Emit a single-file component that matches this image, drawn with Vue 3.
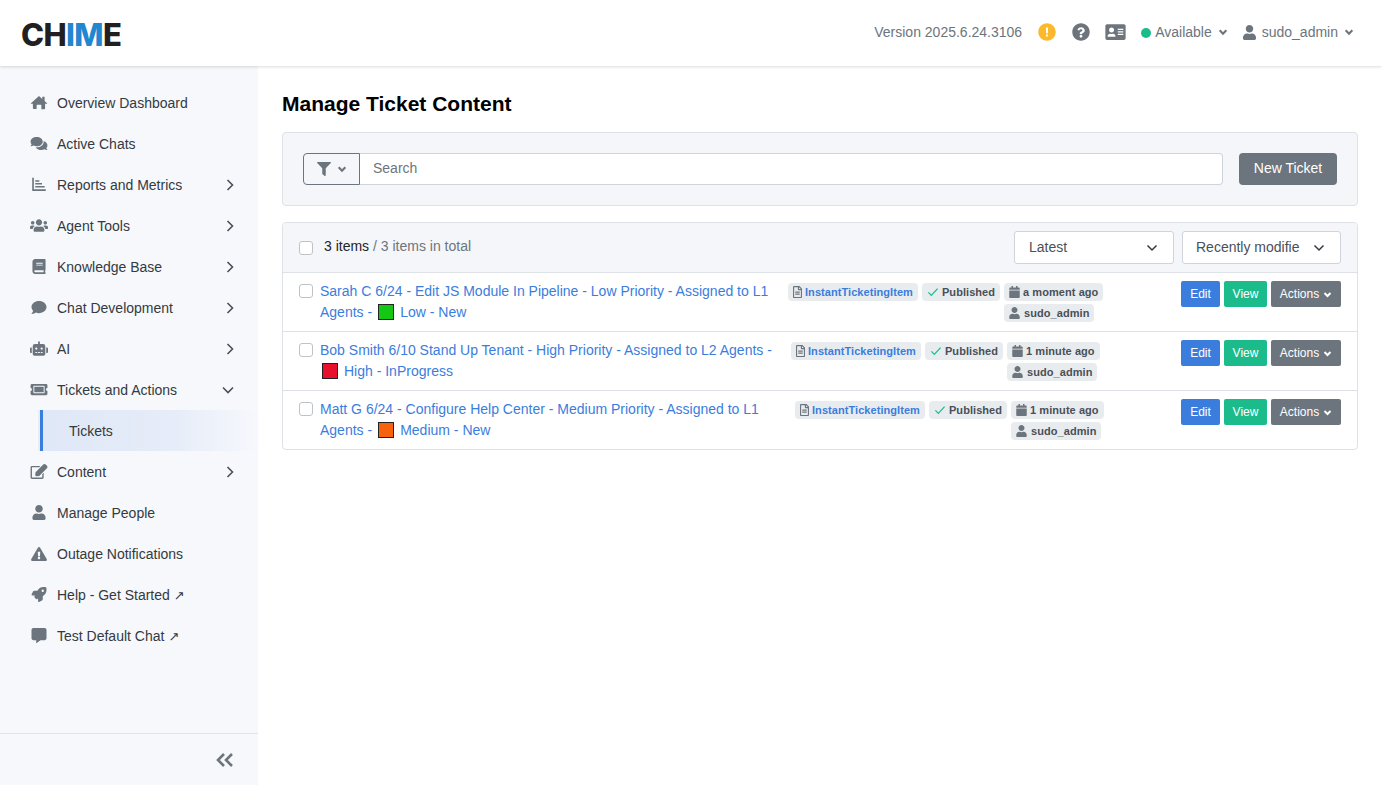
<script setup>
const icons = {
  home: ['0 0 576 512', 'M288 36L400 134V68c0-6 5-11 11-11h58c6 0 11 5 11 11v137l84 74c8 7 3 21-8 21h-60v164c0 13-11 24-24 24H368V352c0-9-7-16-16-16H224c-9 0-16 7-16 16v128H104c-13 0-24-11-24-24V300H20c-11 0-16-14-8-21z'],
  comments: ['0 0 576 512', 'M416 192c0-88.4-93.1-160-208-160S0 103.6 0 192c0 34.3 14.1 65.9 38 92-13.4 30.2-35.5 54.2-35.8 54.5-2.2 2.3-2.8 5.7-1.5 8.7S4.8 352 8 352c36.6 0 66.9-12.3 88.7-25 32.2 15.7 70.3 25 111.3 25 114.9 0 208-71.6 208-160zm122 220c23.9-26 38-57.7 38-92 0-66.9-53.5-124.2-129.3-148.1.9 6.6 1.3 13.3 1.3 20.1 0 105.9-107.7 192-240 192-10.8 0-21.3-.8-31.7-1.9C207.8 439.6 281.8 480 368 480c41 0 79.1-9.2 111.3-25 21.8 12.7 52.1 25 88.7 25 3.2 0 6.1-1.9 7.3-4.8 1.3-2.9.7-6.3-1.5-8.7-.3-.3-22.4-24.2-35.8-54.5z'],
  chart: ['0 0 512 512', 'M24 24h56v392c0 4 2 6 6 6h402v60H48c-13 0-24-11-24-24zM128 112h140v52H128zM128 208h230v52H128zM128 304h320v52H128z'],
  users: ['0 0 640 512', 'M96 224c35.3 0 64-28.7 64-64s-28.7-64-64-64-64 28.7-64 64 28.7 64 64 64zm448 0c35.3 0 64-28.7 64-64s-28.7-64-64-64-64 28.7-64 64 28.7 64 64 64zm32 32h-64c-17.6 0-33.5 7.1-45.1 18.6 40.3 22.1 68.9 62 75.1 109.4h66c17.7 0 32-14.3 32-32v-32c0-35.3-28.7-64-64-64zm-256 0c61.9 0 112-50.1 112-112S381.9 32 320 32 208 82.1 208 144s50.1 112 112 112zm76.8 32h-8.3c-20.8 10-43.9 16-68.5 16s-47.6-6-68.5-16h-8.3C179.6 288 128 339.6 128 403.2V432c0 26.5 21.5 48 48 48h288c26.5 0 48-21.5 48-48v-28.8c0-63.6-51.6-115.2-115.2-115.2zm-223.7-13.4C161.5 263.1 145.6 256 128 256H64c-35.3 0-64 28.7-64 64v32c0 17.7 14.3 32 32 32h65.9c6.3-47.4 34.9-87.3 75.2-109.4z'],
  book: ['0 0 448 512', 'M448 360V24c0-13.3-10.7-24-24-24H96C43 0 0 43 0 96v320c0 53 43 96 96 96h328c13.3 0 24-10.7 24-24v-16c0-7.5-3.5-14.3-8.9-18.7-4.2-15.4-4.2-59.3 0-74.7 5.4-4.3 8.9-11.1 8.9-18.6zM128 134c0-3.3 2.7-6 6-6h212c3.3 0 6 2.7 6 6v20c0 3.3-2.7 6-6 6H134c-3.3 0-6-2.7-6-6v-20zm0 64c0-3.3 2.7-6 6-6h212c3.3 0 6 2.7 6 6v20c0 3.3-2.7 6-6 6H134c-3.3 0-6-2.7-6-6v-20zm253.4 250H96c-17.7 0-32-14.3-32-32 0-17.6 14.4-32 32-32h285.4c-1.9 17.1-1.9 46.9 0 64z'],
  comment: ['0 0 512 512', 'M256 32C114.6 32 0 125.1 0 240c0 49.6 21.4 95 57 130.7C44.5 421.1 2.7 466 2.2 466.5c-2.2 2.3-2.8 5.7-1.5 8.7S4.8 480 8 480c66.3 0 116-31.8 140.6-51.4 32.7 12.3 69 19.4 107.4 19.4 141.4 0 256-93.1 256-208S397.4 32 256 32z'],
  robot: ['0 0 640 512', 'M32,224H64V416H32A31.96166,31.96166,0,0,1,0,384V256A31.96166,31.96166,0,0,1,32,224Zm512-48V448a64.06328,64.06328,0,0,1-64,64H160a64.06328,64.06328,0,0,1-64-64V176a79.974,79.974,0,0,1,80-80H288V32a32,32,0,0,1,64,0V96H464A79.974,79.974,0,0,1,544,176ZM264,256a40,40,0,1,0-40,40A39.997,39.997,0,0,0,264,256Zm-8,128H192v32h64Zm96,0H288v32h64ZM456,256a40,40,0,1,0-40,40A39.997,39.997,0,0,0,456,256Zm-8,128H384v32h64ZM640,256V384a31.96166,31.96166,0,0,1-32,32H576V224h32A31.96166,31.96166,0,0,1,640,256Z'],
  ticket: ['0 0 576 512', 'M128 160h320v192H128V160zm400 96c0 26.51 21.49 48 48 48v96c0 26.51-21.49 48-48 48H48c-26.51 0-48-21.49-48-48v-96c26.51 0 48-21.49 48-48s-21.49-48-48-48v-96c0-26.51 21.49-48 48-48h480c26.51 0 48 21.49 48 48v96c-26.51 0-48 21.49-48 48zm-48-104c0-13.255-10.745-24-24-24H120c-13.255 0-24 10.745-24 24v208c0 13.255 10.745 24 24 24h336c13.255 0 24-10.745 24-24V152z'],
  edit: ['0 0 576 512', 'M402.3 344.9l32-32c5-5 13.7-1.5 13.7 5.7V464c0 26.5-21.5 48-48 48H48c-26.5 0-48-21.5-48-48V112c0-26.5 21.5-48 48-48h273.5c7.1 0 10.7 8.6 5.7 13.7l-32 32c-1.5 1.5-3.5 2.3-5.7 2.3H48v352h352V350.5c0-2.1.8-4.1 2.3-5.6zm156.6-201.8L296.3 405.7l-90.4 10c-26.2 2.9-48.5-19.2-45.6-45.6l10-90.4L432.9 17.1c22.9-22.9 59.9-22.9 82.7 0l43.2 43.2c22.9 22.9 22.9 60 .1 82.8z'],
  user: ['0 0 448 512', 'M224 256c70.7 0 128-57.3 128-128S294.7 0 224 0 96 57.3 96 128s57.3 128 128 128zm89.6 32h-16.7c-22.2 10.2-46.9 16-72.9 16s-50.6-5.8-72.9-16h-16.7C60.2 288 0 348.2 0 422.4V464c0 26.5 21.5 48 48 48h352c26.5 0 48-21.5 48-48v-41.6c0-74.2-60.2-134.4-134.4-134.4z'],
  warning: ['0 0 576 512', 'M569.517 440.013C587.975 472.007 564.806 512 527.94 512H48.054c-36.937 0-59.999-40.055-41.577-71.987L246.423 23.985c18.467-32.009 64.72-31.951 83.154 0l239.94 416.028zM288 354c-25.405 0-46 20.595-46 46s20.595 46 46 46 46-20.595 46-46-20.595-46-46-46zm-43.673-165.346l7.418 136c.347 6.364 5.609 11.346 11.982 11.346h48.546c6.373 0 11.635-4.982 11.982-11.346l7.418-136c.375-6.874-5.098-12.654-11.982-12.654h-63.383c-6.884 0-12.356 5.78-11.981 12.654z'],
  rocket: ['0 0 512 512', 'M505.12019,19.09375c-1.18945-5.53125-6.65819-11-12.207-12.1875C460.716,0,435.507,0,410.40747,0,307.17523,0,245.26909,55.20312,199.05238,128H94.83772c-16.34763.01562-35.55658,11.875-42.88664,26.48438L2.51562,253.29688A28.4,28.4,0,0,0,0,264a24.00867,24.00867,0,0,0,24.00582,24H127.81618l-22.47457,22.46875c-11.36521,11.36133-12.99607,32.25781,0,45.25L156.24582,406.625c11.15623,11.1875,32.15619,13.15625,45.27726,0l22.47457-22.46875V488a24.00867,24.00867,0,0,0,24.00581,24,28.55934,28.55934,0,0,0,10.707-2.51562l98.72834-49.39063c14.62888-7.29687,26.50776-26.5,26.50776-42.85937V312.79688c72.59753-46.3125,128.03493-108.40626,128.03493-211.09376C512.07526,76.5,512.07526,51.29688,505.12019,19.09375ZM384.04033,168A40,40,0,1,1,424.05,128,40.02322,40.02322,0,0,1,384.04033,168Z'],
  commentAlt: ['0 0 512 512', 'M448 0H64C28.7 0 0 28.7 0 64v288c0 35.3 28.7 64 64 64h96v84c0 9.8 11.2 15.5 19.1 9.7L304 416h144c35.3 0 64-28.7 64-64V64c0-35.3-28.7-64-64-64z'],
  question: ['0 0 512 512', 'M504 256c0 137-111 248-248 248S8 393 8 256 119 8 256 8s248 111 248 248zM262 120c-48 0-79 20-103 56-3 5-2 11 2 14l30 23c5 3 11 3 15-2 16-20 27-31 51-31 18 0 40 11 40 29 0 13-11 20-29 30-21 12-48 26-48 62v4c0 6 5 11 11 11h48c6 0 11-5 11-11v-1c0-25 73-26 73-93 0-51-53-91-101-91zm-6 216c-22 0-40 18-40 40s18 40 40 40 40-18 40-40-18-40-40-40z'],
  alert: ['0 0 512 512', 'M504 256c0 136.997-111.043 248-248 248S8 392.997 8 256C8 119.083 119.043 8 256 8s248 111.083 248 248zm-248 70c-17 0-31 14-31 31s14 31 31 31 31-14 31-31-14-31-31-31zm-30-186l6 150c.3 6 5 10 11 10h26c6 0 10.700-4 11-10l6-150c.3-6-5-12-11-12h-38c-6 0-11.300 6-11 12z'],
  idCard: ['0 0 576 512', 'M528 32H48C21.5 32 0 53.5 0 80v352c0 26.500 21.500 48 48 48h480c26.500 0 48-21.500 48-48V80c0-26.500-21.500-48-48-48zM352 168c0-4.400 3.600-8 8-8h144c4.400 0 8 3.600 8 8v24c0 4.400-3.600 8-8 8H360c-4.400 0-8-3.600-8-8zm0 72c0-4.400 3.600-8 8-8h144c4.400 0 8 3.600 8 8v24c0 4.400-3.600 8-8 8H360c-4.400 0-8-3.600-8-8zm0 72c0-4.400 3.600-8 8-8h144c4.400 0 8 3.600 8 8v24c0 4.400-3.600 8-8 8H360c-4.400 0-8-3.600-8-8zM176 128c39.800 0 72 32.200 72 72s-32.200 72-72 72-72-32.200-72-72 32.200-72 72-72zM64 376c0-40 32-72 72-72h8c10 4 20 6 32 6s22-2 32-6h8c40 0 72 32 72 72 0 10-8 16-16 16H80c-8 0-16-6-16-16z'],
  filter: ['0 0 512 512', 'M487.976 0H24.028C2.71 0-8.047 25.866 7.058 40.971L192 225.941V432c0 7.831 3.821 15.17 10.237 19.662l80 55.98C298.02 518.69 320 507.493 320 487.98V225.941l184.947-184.97C520.021 25.896 509.338 0 487.976 0z'],
  calendar: ['0 0 448 512', 'M12 192h424c6.600 0 12 5.400 12 12v260c0 26.500-21.500 48-48 48H48c-26.500 0-48-21.500-48-48V204c0-6.600 5.400-12 12-12zm436-44v-36c0-26.500-21.500-48-48-48h-48V12c0-6.600-5.400-12-12-12h-40c-6.600 0-12 5.400-12 12v52H160V12c0-6.600-5.400-12-12-12h-40c-6.600 0-12 5.400-12 12v52H48C21.500 64 0 85.500 0 112v36c0 6.600 5.400 12 12 12h424c6.600 0 12-5.400 12-12z'],
  file: ['0 0 384 512', 'M288 248v28c0 6.6-5.4 12-12 12H108c-6.6 0-12-5.4-12-12v-28c0-6.6 5.4-12 12-12h168c6.6 0 12 5.4 12 12zm-12 72H108c-6.6 0-12 5.4-12 12v28c0 6.6 5.4 12 12 12h168c6.6 0 12-5.4 12-12v-28c0-6.6-5.4-12-12-12zm108-188.1V464c0 26.5-21.5 48-48 48H48c-26.5 0-48-21.5-48-48V48C0 21.5 21.500 0 48 0h204.100C264.800 0 277 5.100 286 14.100L369.900 98c9 8.900 14.100 21.200 14.100 33.900zm-128-80V128h76.100L256 51.900zM336 464V176H232c-13.300 0-24-10.700-24-24V48H48v416h288z']
}

const navItems = [
  { label: 'Overview Dashboard', icon: 'home' },
  { label: 'Active Chats', icon: 'comments' },
  { label: 'Reports and Metrics', icon: 'chart', arrow: 'right' },
  { label: 'Agent Tools', icon: 'users', arrow: 'right' },
  { label: 'Knowledge Base', icon: 'book', arrow: 'right' },
  { label: 'Chat Development', icon: 'comment', arrow: 'right' },
  { label: 'AI', icon: 'robot', arrow: 'right' },
  { label: 'Tickets and Actions', icon: 'ticket', arrow: 'down', children: ['Tickets'] },
  { label: 'Content', icon: 'edit', arrow: 'right' },
  { label: 'Manage People', icon: 'user' },
  { label: 'Outage Notifications', icon: 'warning' },
  { label: 'Help - Get Started', icon: 'rocket', external: true },
  { label: 'Test Default Chat', icon: 'commentAlt', external: true }
]

const tickets = [
  { id: 1, line1: 'Sarah C 6/24 - Edit JS Module In Pipeline - Low Priority - Assigned to L1', line2: 'Agents -', color: '#14c714', status: 'Low - New', time: 'a moment ago', metaLeft: 788 },
  { id: 2, line1: 'Bob Smith 6/10 Stand Up Tenant - High Priority - Assigned to L2 Agents -', line2: '', color: '#e8112d', status: 'High - InProgress', time: '1 minute ago', metaLeft: 791 },
  { id: 3, line1: 'Matt G 6/24 - Configure Help Center - Medium Priority - Assigned to L1', line2: 'Agents -', color: '#f7630c', status: 'Medium - New', time: '1 minute ago', metaLeft: 795 }
]
</script>

<template>
  <div class="page">
    <header class="topbar">
      <div class="logo">CH<span class="logo-blue">IM</span>E</div>
      <div class="top-right">
        <span class="version">Version 2025.6.24.3106</span>
        <svg class="top-icon alert" :viewBox="icons.alert[0]"><path fill-rule="evenodd" :d="icons.alert[1]" /></svg>
        <svg class="top-icon help" :viewBox="icons.question[0]"><path fill-rule="evenodd" :d="icons.question[1]" /></svg>
        <svg class="top-icon card" :viewBox="icons.idCard[0]"><path fill-rule="evenodd" :d="icons.idCard[1]" /></svg>
        <div class="status">
          <span class="dot"></span>
          <span>Available</span>
          <svg class="mini-chev" viewBox="0 0 12 12"><polyline points="2,4 6,8 10,4" /></svg>
        </div>
        <div class="top-user">
          <svg class="top-user-icon" :viewBox="icons.user[0]"><path :d="icons.user[1]" /></svg>
          <span>sudo_admin</span>
          <svg class="mini-chev" viewBox="0 0 12 12"><polyline points="2,4 6,8 10,4" /></svg>
        </div>
      </div>
    </header>

    <div class="body-row">
      <aside class="sidebar">
        <nav class="nav">
          <template v-for="item in navItems" :key="item.label">
            <div class="nav-item">
              <span class="nav-icon" :class="'i-' + item.icon">
                <svg :viewBox="icons[item.icon][0]"><path fill-rule="evenodd" :d="icons[item.icon][1]" /></svg>
              </span>
              <span class="nav-label">{{ item.label }}<span v-if="item.external" class="ext">↗</span></span>
              <svg v-if="item.arrow === 'right'" class="nav-arrow" viewBox="0 0 12 12"><polyline points="3.500,1 8.500,6 3.500,11" /></svg>
              <svg v-if="item.arrow === 'down'" class="nav-arrow down" viewBox="0 0 12 12"><polyline points="1,3.500 6,8.500 11,3.500" /></svg>
            </div>
            <div v-for="child in item.children" :key="child" class="nav-child">{{ child }}</div>
          </template>
        </nav>
        <div class="side-foot">
          <svg class="collapse" viewBox="0 0 18 14"><polyline points="8,1 2,7 8,13" /><polyline points="16,1 10,7 16,13" /></svg>
        </div>
      </aside>

      <main class="main">
        <h1 class="title">Manage Ticket Content</h1>

        <section class="search-card">
          <div class="search-group">
            <button class="filter-btn">
              <svg class="filter-icon" :viewBox="icons.filter[0]"><path :d="icons.filter[1]" /></svg>
              <svg class="mini-chev" viewBox="0 0 12 12"><polyline points="2,4 6,8 10,4" /></svg>
            </button>
            <div class="search-input">Search</div>
          </div>
          <button class="new-btn">New Ticket</button>
        </section>

        <section class="list">
          <div class="list-head">
            <span class="check"></span>
            <span class="count"><span class="count-dark">3 items</span> / 3 items in total</span>
            <div class="selects">
              <div class="select latest">
                <span class="sel-text">Latest</span>
                <svg class="sel-chev" viewBox="0 0 12 12"><polyline points="1.500,3.500 6,8 10.500,3.500" /></svg>
              </div>
              <div class="select recent">
                <span class="sel-text">Recently modifie</span>
                <svg class="sel-chev" viewBox="0 0 12 12"><polyline points="1.500,3.500 6,8 10.500,3.500" /></svg>
              </div>
            </div>
          </div>

          <div v-for="t in tickets" :key="t.id" class="row">
            <span class="check row-check"></span>
            <div class="row-title">
              <a class="link">{{ t.line1 }}</a><br />
              <a v-if="t.line2" class="link">{{ t.line2 }}</a>
              <span class="swatch" :class="{ first: !t.line2 }" :style="{ background: t.color }"></span>
              <a class="link">{{ t.status }}</a>
            </div>
            <div class="meta" :style="{ left: t.metaLeft - 283 + 'px' }">
              <span class="tag tag-type">
                <svg class="tag-icon grey" :viewBox="icons.file[0]"><path fill-rule="evenodd" :d="icons.file[1]" /></svg>
                InstantTicketingItem
              </span>
              <span class="tag">
                <svg class="tag-check" viewBox="0 0 14 12"><polyline points="1.500,6.500 5,10 12.500,2" /></svg>
                Published
              </span>
              <div class="tag-col">
                <span class="tag">
                  <svg class="tag-icon grey cal-i" :viewBox="icons.calendar[0]"><path :d="icons.calendar[1]" /></svg>
                  {{ t.time }}
                </span>
                <span class="tag">
                  <svg class="tag-icon grey user-i" :viewBox="icons.user[0]"><path :d="icons.user[1]" /></svg>
                  sudo_admin
                </span>
              </div>
            </div>
            <div class="actions">
              <button class="btn blue">Edit</button>
              <button class="btn green">View</button>
              <button class="btn grey-btn">
                Actions
                <svg class="act-chev" viewBox="0 0 12 12"><polyline points="2,4 6,8 10,4" /></svg>
              </button>
            </div>
          </div>
        </section>
      </main>
    </div>
  </div>
</template>

<style>
html, body {
  margin: 0;
  height: 100%;
  overflow: hidden;
}
</style>

<style scoped>
.page {
  height: 785px;
  display: flex;
  flex-direction: column;
  font-family: "Liberation Sans", Arial, sans-serif;
  font-size: 14px;
  color: #212529;
  background: #fff;
}

.topbar {
  height: 66px;
  flex-shrink: 0;
  display: flex;
  align-items: center;
  justify-content: space-between;
  padding: 0 28px 0 21px;
  background: #fff;
  box-shadow: 0 1px 3px rgba(0, 0, 0, 0.14);
  position: relative;
  z-index: 2;
}

.logo {
  font-family: Inter, "Liberation Sans", sans-serif;
  font-size: 31px;
  font-weight: 800;
  letter-spacing: -0.6px;
  color: #231f20;
  line-height: 32px;
  margin-top: 3px;
}

.logo-blue {
  color: #2287d0;
}

.top-right {
  display: flex;
  align-items: center;
  color: #6c757d;
  margin-top: -2px;
}

.version {
  margin-right: 16px;
}

.top-icon {
  height: 18px;
  width: 18px;
  fill: #6c757d;
}

.alert {
  fill: #fcb92c;
  margin-right: 16px;
}

.help {
  margin-right: 15px;
}

.card {
  width: 21px;
  margin-right: 15px;
}

.status {
  display: flex;
  align-items: center;
  margin-right: 15px;
}

.dot {
  width: 10px;
  height: 10px;
  border-radius: 50%;
  background: #1cbb8c;
  margin-right: 4px;
  margin-top: 1px;
}

.mini-chev {
  width: 10px;
  height: 10px;
  margin-left: 6px;
  fill: none;
  stroke: #6c757d;
  stroke-width: 2.6;
}

.top-user {
  display: flex;
  align-items: center;
}

.top-user-icon {
  width: 13px;
  height: 15px;
  fill: #6c757d;
  margin-right: 6px;
}

.body-row {
  flex: 1;
  display: flex;
  min-height: 0;
}

.sidebar {
  width: 258px;
  flex-shrink: 0;
  background: #f6f8fc;
  display: flex;
  flex-direction: column;
}

.nav {
  flex: 1;
  padding-top: 16px;
}

.nav-item {
  height: 41px;
  display: flex;
  align-items: center;
  padding: 0 22px 0 30px;
  color: #343a40;
}

.nav-icon {
  width: 27px;
  flex-shrink: 0;
  display: flex;
  align-items: center;
}

.nav-icon svg {
  width: 18px;
  height: 15px;
  fill: #6c757d;
}

.nav-icon.i-warning svg {
  height: 14px;
}

.nav-label {
  flex: 1;
}

.ext {
  font-family: "DejaVu Sans", sans-serif;
  font-size: 13px;
  margin-left: 4px;
}

.nav-arrow {
  width: 12px;
  height: 12px;
  fill: none;
  stroke: #495057;
  stroke-width: 1.6;
}

.nav-arrow.down {
  margin-right: 2px;
}

.nav-child {
  height: 41px;
  margin-left: 40px;
  padding-left: 26px;
  display: flex;
  align-items: center;
  color: #343a40;
  border-left: 3px solid #3b7ddd;
  background: linear-gradient(90deg, #dfe8f7 0%, #e6ecf8 60%, #f6f8fc 100%);
  box-shadow: -2px 0 0 #e8edf6;
}

.side-foot {
  height: 51px;
  flex-shrink: 0;
  border-top: 1px solid #e2e4e9;
  display: flex;
  align-items: center;
  justify-content: flex-end;
  padding-right: 24px;
}

.collapse {
  width: 18px;
  height: 14px;
  fill: none;
  stroke: #6c757d;
  stroke-width: 2.6;
}

.main {
  flex: 1;
  min-width: 0;
  padding: 0 24px;
}

.title {
  margin: 26px 0 17px;
  font-size: 21px;
  line-height: 23px;
  font-weight: 700;
  color: #000;
}

.search-card {
  height: 72px;
  display: flex;
  align-items: center;
  padding: 0 20px;
  background: #f5f6fa;
  border: 1px solid #dee2e6;
  border-radius: 4px;
  margin-bottom: 16px;
}

.search-group {
  flex: 1;
  display: flex;
  margin-right: 16px;
}

.filter-btn {
  width: 57px;
  height: 32px;
  display: flex;
  align-items: center;
  justify-content: center;
  background: #f5f6fa;
  border: 1px solid #6c757d;
  border-radius: 4px 0 0 4px;
  padding: 0;
}

.filter-icon {
  width: 14px;
  height: 14px;
  fill: #6c757d;
}

.search-input {
  flex: 1;
  height: 32px;
  box-sizing: border-box;
  line-height: 28px;
  padding-left: 13px;
  background: #fff;
  border: 1px solid #ced4da;
  border-left: none;
  border-radius: 0 4px 4px 0;
  color: #6c757d;
}

.new-btn {
  width: 98px;
  height: 32px;
  border: none;
  border-radius: 4px;
  background: #6c757d;
  color: #fff;
  font-family: inherit;
  font-size: 14px;
  padding: 0 0 2px;
}

.list {
  border: 1px solid #dee2e6;
  border-radius: 4px;
}

.list-head {
  height: 49px;
  display: flex;
  align-items: center;
  padding: 0 16px;
  background: #f5f6fa;
  border-bottom: 1px solid #dee2e6;
  border-radius: 4px 4px 0 0;
}

.check {
  width: 14px;
  height: 14px;
  box-sizing: border-box;
  flex-shrink: 0;
  background: #fff;
  border: 1px solid #bfc3c8;
  border-radius: 3px;
}

.count {
  margin-left: 11px;
  color: #6c757d;
  margin-top: -4px;
}

.count-dark {
  color: #212529;
}

.selects {
  margin-left: auto;
  display: flex;
  gap: 8px;
}

.select {
  height: 33px;
  box-sizing: border-box;
  display: flex;
  align-items: center;
  justify-content: space-between;
  background: #fff;
  border: 1px solid #ced4da;
  border-radius: 3px;
  padding: 0 15px 0 14px;
  color: #495057;
}

.sel-text {
  margin-top: -2px;
}

.latest {
  width: 160px;
}

.recent {
  width: 159px;
  padding-left: 13px;
}

.sel-chev {
  width: 12px;
  height: 12px;
  fill: none;
  stroke: #343a40;
  stroke-width: 1.5;
}

.row {
  position: relative;
  height: 58px;
  display: flex;
  padding: 0 16px;
  border-bottom: 1px solid #dee2e6;
}

.row:last-child {
  border-bottom: none;
}

.row-check {
  margin-top: 11px;
}

.row-title {
  margin-left: 7px;
  margin-top: 8px;
  line-height: 21px;
  white-space: nowrap;
}

.link {
  color: #3b7ddd;
}

.swatch {
  display: inline-block;
  width: 16px;
  height: 16px;
  box-sizing: border-box;
  border: 1px solid #222;
  margin: 0 6px 0 6px;
  vertical-align: -3px;
}

.swatch.first {
  margin-left: 2px;
}

.meta {
  position: absolute;
  top: 10px;
  display: flex;
  gap: 4px;
  align-items: flex-start;
}

.tag-col {
  display: flex;
  flex-direction: column;
  align-items: flex-start;
  gap: 3px;
}

.tag {
  height: 18px;
  display: inline-flex;
  align-items: center;
  padding: 0 5px;
  gap: 3px;
  background: #e9ecef;
  border-radius: 4px;
  color: #495057;
  font-size: 11px;
  font-weight: 700;
  letter-spacing: 0.06px;
  white-space: nowrap;
}

.tag-type {
  color: #3b7ddd;
}

.tag-icon {
  width: 9px;
  height: 12px;
}

.tag-icon.grey {
  fill: #6c757d;
}

.tag-icon.cal-i {
  width: 11px;
}

.tag-icon.user-i {
  width: 11px;
  margin-right: 1px;
}

.tag-check {
  width: 12px;
  height: 10px;
  fill: none;
  stroke: #1cbb8c;
  stroke-width: 1.500;
}

.actions {
  margin-left: auto;
  margin-top: 8px;
  display: flex;
  gap: 4px;
  height: 26px;
}

.btn {
  height: 26px;
  border: none;
  border-radius: 2px;
  color: #fff;
  font-family: inherit;
  font-size: 12px;
  padding: 0;
  display: flex;
  align-items: center;
  justify-content: center;
}

.blue {
  width: 39px;
  background: #3b7ddd;
}

.green {
  width: 43px;
  background: #1cbb8c;
}

.grey-btn {
  width: 70px;
  background: #6c757d;
}

.act-chev {
  width: 9px;
  height: 9px;
  margin-left: 4px;
  fill: none;
  stroke: #fff;
  stroke-width: 2.6;
}
</style>
